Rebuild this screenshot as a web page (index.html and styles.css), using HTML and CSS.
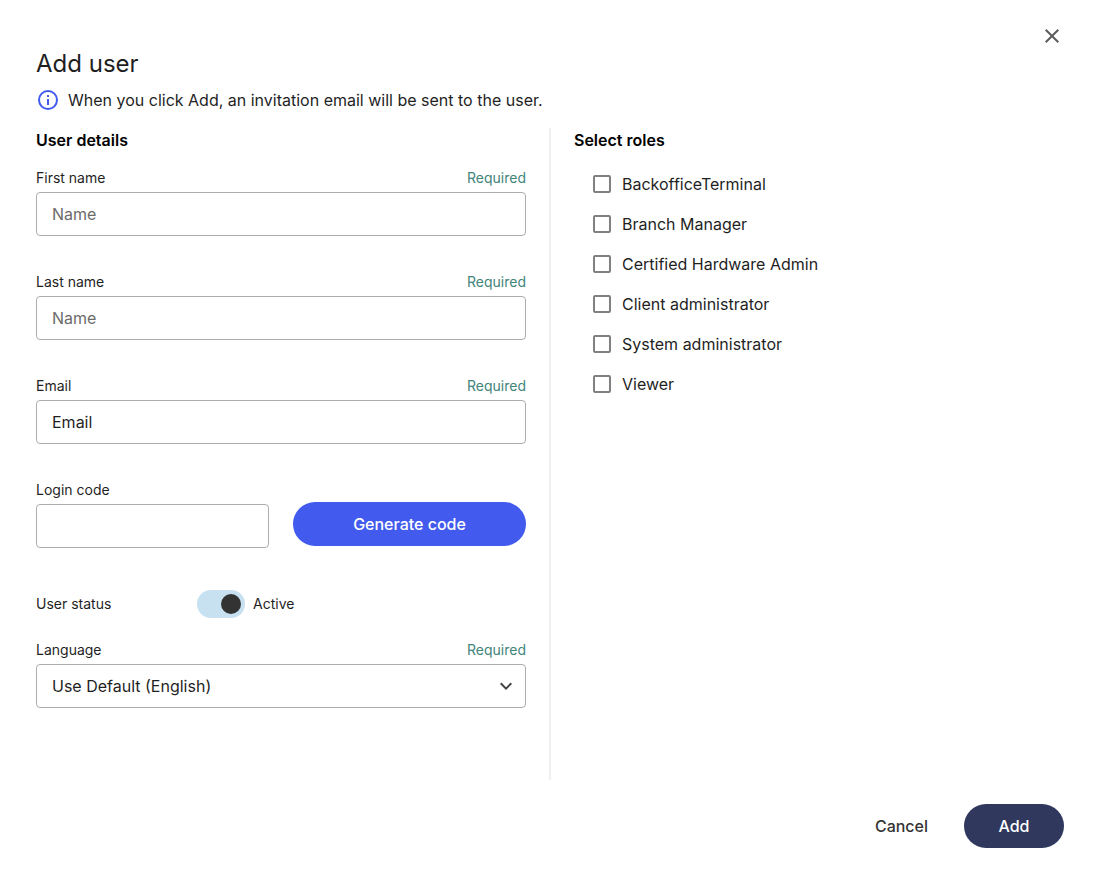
FILE: index.html
```html
<!DOCTYPE html>
<html lang="en">
<head>
    <meta charset="UTF-8">
    <meta name="viewport" content="width=device-width, initial-scale=1.0">
    <title>Add user</title>
    <link rel="stylesheet" href="styles.css">
</head>
<body>
    <form class="dialog">
        <button type="button" class="close" aria-label="Close">
            <svg width="24" height="24" viewBox="0 0 24 24" fill="none" stroke="#5c5c5c" stroke-width="2">
                <path d="M5.7 5.7l12.6 12.6M18.3 5.7L5.7 18.3"/>
            </svg>
        </button>

        <header>
            <h1>Add user</h1>
            <p class="info">
                <svg width="24" height="24" viewBox="0 0 24 24" fill="#425bee">
                    <circle cx="12" cy="12" r="9" fill="none" stroke="#425bee" stroke-width="2"/>
                    <path d="M11 7h2v2h-2zM11 11h2v6h-2z"/>
                </svg>
                <span>When you click Add, an invitation email will be sent to the user.</span>
            </p>
        </header>

        <main class="columns">
            <section class="details">
                <h2>User details</h2>

                <div class="field">
                    <div class="field-top">
                        <label for="first-name">First name</label>
                        <span class="required">Required</span>
                    </div>
                    <input type="text" id="first-name" placeholder="Name">
                </div>

                <div class="field">
                    <div class="field-top">
                        <label for="last-name">Last name</label>
                        <span class="required">Required</span>
                    </div>
                    <input type="text" id="last-name" placeholder="Name">
                </div>

                <div class="field">
                    <div class="field-top">
                        <label for="email">Email</label>
                        <span class="required">Required</span>
                    </div>
                    <input type="text" id="email" value="Email">
                </div>

                <div class="field code-row">
                    <div>
                        <div class="field-top">
                            <label for="login-code">Login code</label>
                        </div>
                        <input type="text" id="login-code">
                    </div>
                    <button type="button" class="btn btn-generate">Generate code</button>
                </div>

                <div class="status">
                    <label class="status-label" for="status">User status</label>
                    <input type="checkbox" class="toggle" id="status" checked>
                    <span>Active</span>
                </div>

                <div class="field">
                    <div class="field-top">
                        <label for="language">Language</label>
                        <span class="required">Required</span>
                    </div>
                    <div class="select">
                        <select id="language">
                            <option>Use Default (English)</option>
                        </select>
                        <svg class="chevron" width="24" height="24" viewBox="0 0 24 24" fill="none" stroke="#444" stroke-width="2">
                            <path d="M6.7 9.3l5.3 5.3 5.3-5.3"/>
                        </svg>
                    </div>
                </div>
            </section>

            <div class="divider"></div>

            <section class="roles">
                <h2>Select roles</h2>
                <ul>
                    <li><label><input type="checkbox">BackofficeTerminal</label></li>
                    <li><label><input type="checkbox">Branch Manager</label></li>
                    <li><label><input type="checkbox">Certified Hardware Admin</label></li>
                    <li><label><input type="checkbox">Client administrator</label></li>
                    <li><label><input type="checkbox">System administrator</label></li>
                    <li><label><input type="checkbox">Viewer</label></li>
                </ul>
            </section>
        </main>

        <footer>
            <button type="button" class="btn btn-cancel">Cancel</button>
            <button type="submit" class="btn btn-add">Add</button>
        </footer>
    </form>
</body>
</html>
```
FILE: styles.css
```css
* {
    box-sizing: border-box;
}

body {
    margin: 0;
    font-family: Inter, sans-serif;
    font-size: 16px;
    line-height: 24px;
    color: #1f1f1f;
    background-color: #fff;
}

input,
select,
button {
    font: inherit;
    color: inherit;
}

button {
    cursor: pointer;
}

.dialog {
    display: flex;
    flex-direction: column;
    min-height: 100vh;
    padding: 24px 36px 36px;
}

/* Header */
.close {
    align-self: flex-end;
    display: flex;
    padding: 0;
    border: none;
    background: none;
}

h1 {
    margin: 0 0 8px;
    font-size: 24px;
    line-height: 32px;
    font-weight: 400;
}

.info {
    display: flex;
    gap: 8px;
    margin: 0 0 16px;
}

/* Columns */
.columns {
    flex: 1;
    display: grid;
    grid-template-columns: 1fr 2px 1fr;
    column-gap: 23px;
}

.divider {
    background-color: #f0f0f0;
}

h2 {
    margin: 0;
    font-size: 16px;
    line-height: 24px;
    font-weight: 600;
    color: #000;
}

.details h2 {
    margin-bottom: 16px;
}

/* Fields */
.field {
    margin-bottom: 36px;
}

.field-top {
    display: flex;
    justify-content: space-between;
    margin-bottom: 4px;
    font-size: 14px;
    line-height: 20px;
}

.required {
    color: #43857a;
}

input[type="text"],
select {
    display: block;
    width: 100%;
    height: 44px;
    padding: 0 15px;
    border: 1px solid #adadad;
    border-radius: 4px;
    background-color: #fff;
}

input::placeholder {
    color: #6b6b6b;
    opacity: 1;
}

.code-row {
    display: grid;
    grid-template-columns: 1fr 1fr;
    column-gap: 24px;
    align-items: end;
}

.status {
    display: flex;
    align-items: center;
    height: 40px;
    margin-bottom: 16px;
    font-size: 14px;
    line-height: 20px;
}

.status-label {
    width: 161px;
}

.toggle {
    appearance: none;
    display: flex;
    align-items: center;
    width: 48px;
    height: 28px;
    margin: 0 8px 0 0;
    padding: 4px;
    border-radius: 14px;
    background-color: #ddd;
}

.toggle::before {
    content: "";
    width: 20px;
    height: 20px;
    border-radius: 50%;
    background-color: #333;
}

.toggle:checked {
    justify-content: flex-end;
    background-color: #c8e1f0;
}

.select {
    position: relative;
}

select {
    appearance: none;
}

.chevron {
    position: absolute;
    top: 10px;
    right: 8px;
    pointer-events: none;
}

/* Roles */
.roles ul {
    list-style: none;
    margin: 12px 0 0;
    padding: 0 0 0 16px;
}

.roles label {
    display: flex;
    align-items: center;
    gap: 8px;
    height: 40px;
}

.roles input {
    appearance: none;
    width: 18px;
    height: 18px;
    margin: 3px;
    border: 2px solid #808080;
    border-radius: 2px;
}

.roles input:checked {
    background-color: #425bee;
}

/* Buttons */
.btn {
    height: 44px;
    padding: 0 24px;
    border: none;
    border-radius: 22px;
    font-weight: 500;
    color: #fff;
}

.btn-generate {
    margin-bottom: 2px;
    background-color: #425bee;
}

.btn-cancel {
    padding: 0 12px;
    background: none;
    color: #333;
}

.btn-add {
    min-width: 100px;
    background-color: #30385e;
}

footer {
    display: flex;
    justify-content: flex-end;
    gap: 24px;
    margin-top: 24px;
}
```
